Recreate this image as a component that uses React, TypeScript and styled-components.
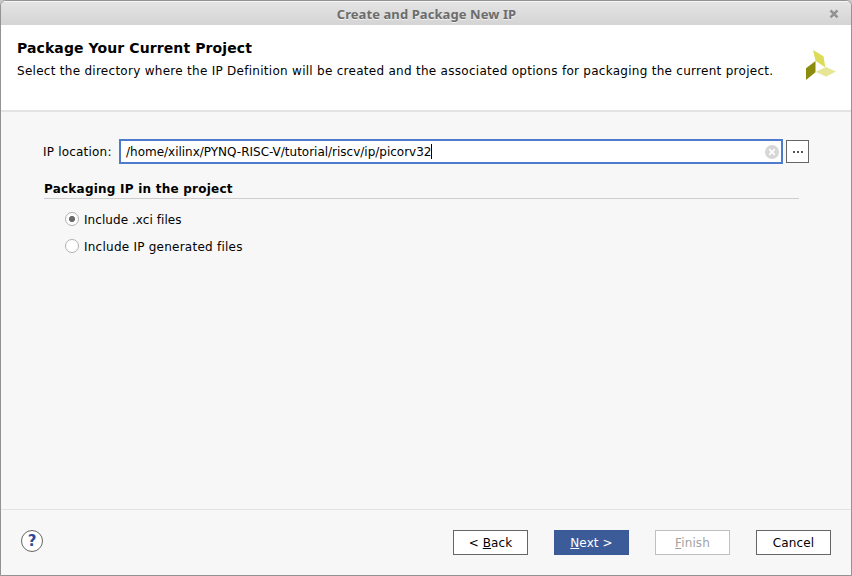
import React, { useState } from "react";
import styled, { createGlobalStyle } from "styled-components";

const GlobalStyle = createGlobalStyle`
  * { box-sizing: border-box; }
  html, body { margin: 0; background: #c9c7c7; overflow: hidden; }
  body { font-family: "DejaVu Sans", sans-serif; font-size: 12px; color: #000; }
  button { font: inherit; }
`;

const Window = styled.div`
  width: 852px;
  height: 576px;
  display: flex;
  flex-direction: column;
  background: #f7f7f7;
  border: 1px solid #949292;
  border-radius: 6px 6px 0 0;
  overflow: hidden;
`;

const TitleBar = styled.header`
  height: 24px;
  flex: none;
  display: grid;
  grid-template-columns: 28px 1fr 28px;
  align-items: center;
  justify-items: center;
  border-top: 1px solid #f6f6f6;
  background: linear-gradient(#e4e4e4, #d4d4d4);
`;

const WindowTitle = styled.div`
  grid-column: 2;
  padding-left: 1px;
  font: bold 13px/18px "Noto Sans", sans-serif;
  letter-spacing: 0.08px;
  color: #6c6c6c;
  text-shadow: 0 1px #f0f0f0;
  white-space: nowrap;
`;

const CloseButton = styled.button`
  display: flex;
  padding: 0;
  border: 0;
  background: none;
  margin-right: 6px;
`;

const Banner = styled.section`
  height: 87px;
  flex: none;
  display: flex;
  justify-content: space-between;
  padding: 13px 15px 0 16px;
  background: #fff;
  border-bottom: 2px solid #e3e3e3;
`;

const BannerTitle = styled.h1`
  margin: 0;
  font-size: 14px;
  line-height: 20px;
  letter-spacing: 0.1px;
`;

const BannerText = styled.p`
  margin: 4px 0 0;
  line-height: 18px;
  letter-spacing: 0.278px;
  white-space: nowrap;
`;

const Logo = styled.svg`
  margin-top: 12px;
  flex: none;
`;

const Content = styled.main`
  flex: 1;
  padding: 27px 42px 0;
`;

const LocationRow = styled.div`
  display: flex;
  align-items: center;
  height: 25px;
`;

const Label = styled.label`
  width: 76px;
  flex: none;
  letter-spacing: 0.2px;
  white-space: nowrap;
`;

const Field = styled.div`
  width: 664px;
  height: 25px;
  display: flex;
  align-items: center;
  padding: 0 2px 0 5px;
  border: 2px solid #4f7bcf;
  background: #fff;
`;

const Path = styled.span`
  white-space: nowrap;
  letter-spacing: -0.01px;
`;

const Caret = styled.span`
  width: 1px;
  height: 15px;
  background: #000;
  margin-right: auto;
`;

const BrowseButton = styled.button`
  width: 23px;
  height: 23px;
  margin-left: 3px;
  padding: 0;
  display: flex;
  align-items: center;
  justify-content: center;
  gap: 2px;
  border: 1px solid #666;
  background: #fff;
`;

const Dot = styled.i`
  width: 2px;
  height: 2px;
  background: #555;
`;

const GroupTitle = styled.h2`
  width: 755px;
  height: 20px;
  margin: 15px 0 0 1px;
  font-size: 12px;
  line-height: 20px;
  letter-spacing: 0.23px;
  border-bottom: 1px solid #cdcdcd;
`;

const Options = styled.div`
  display: flex;
  flex-direction: column;
  gap: 9px;
  padding: 12px 0 0 22px;
`;

const Option = styled.div<{ $tracking: number }>`
  height: 18px;
  display: flex;
  align-items: flex-start;
  gap: 5px;
  line-height: 18px;
  letter-spacing: ${(p) => p.$tracking}px;
`;

const Radio = styled.span<{ $on: boolean }>`
  width: 14px;
  height: 14px;
  margin-top: 1px;
  border: 1px solid #b0b0b0;
  border-radius: 50%;
  background: ${(p) => (p.$on ? "radial-gradient(circle, #6b6b6b 2.7px, #fff 3.5px)" : "#fff")};
`;

const Footer = styled.footer`
  height: 66px;
  flex: none;
  display: flex;
  align-items: flex-start;
  padding: 20px 20px 0;
  border-top: 1px solid #e3e3e3;
`;

const HelpButton = styled.button`
  width: 22px;
  height: 22px;
  padding: 0;
  margin-right: auto;
  border: 1px solid #666;
  border-radius: 50%;
  background: #fff;
  color: #2b4a9b;
  font-weight: bold;
  font-size: 15px;
  line-height: 20px;
`;

const Actions = styled.div`
  display: flex;
  gap: 26px;
`;

const tones = {
  normal: "border-color: #666; background: #fff; color: #000;",
  primary: "border-color: #3b5998; background: #3b5b99; color: #fff;",
  disabled: "border-color: #c0c0c0; background: #fff; color: #a3a3a3;",
};

const ActionButton = styled.button<{ $tone: keyof typeof tones }>`
  width: 75px;
  height: 25px;
  padding: 2px 0 0;
  border: 1px solid;
  line-height: 21px;
  letter-spacing: 0.1px;
  white-space: pre;
  ${(p) => tones[p.$tone]}
`;

const Key = styled.span`
  text-decoration: underline;
  text-decoration-thickness: 1px;
  text-underline-offset: 1px;
  text-decoration-skip-ink: none;
`;

const choices = [
  { text: "Include .xci files", tracking: 0.06 },
  { text: "Include IP generated files", tracking: 0.24 },
];

export default function App() {
  const [selected, setSelected] = useState(0);
  return (
    <>
      <GlobalStyle />
      <Window>
        <TitleBar>
          <WindowTitle>Create and Package New IP</WindowTitle>
          <CloseButton aria-label="Close">
            <svg width="10" height="10" viewBox="0 0 10 10">
              <path d="M1.7 2.5 8.3 9.1M8.3 2.5 1.7 9.1" stroke="#f4f4f4" strokeWidth="2.4" />
              <path d="M1.5 1.5 8.5 8.5M8.5 1.5 1.5 8.5" stroke="#929292" strokeWidth="2.5" />
            </svg>
          </CloseButton>
        </TitleBar>
        <Banner>
          <div>
            <BannerTitle>Package Your Current Project</BannerTitle>
            <BannerText>
              Select the directory where the IP Definition will be created and the associated options for packaging the current project.
            </BannerText>
          </div>
          <Logo width="30" height="30" viewBox="0 0 30 30">
            <path d="M7 0 17.5 6.2 19.4 17.4 9.5 10.7Z" fill="#dcdc58" />
            <path d="M0 18.2 9.5 11V22.3L0 30Z" fill="#8c8c0c" />
            <path d="M9.7 21.7 20 17 30 21.4 20 26.8Z" fill="#e6e696" />
          </Logo>
        </Banner>
        <Content>
          <LocationRow>
            <Label>IP location:</Label>
            <Field>
              <Path>/home/xilinx/PYNQ-RISC-V/tutorial/riscv/ip/picorv32</Path>
              <Caret />
              <svg width="14" height="14" viewBox="0 0 14 14">
                <circle cx="7" cy="7" r="7" fill="#d7d7d7" />
                <path d="M4.2 4.2 9.8 9.8M9.8 4.2 4.2 9.8" stroke="#fff" strokeWidth="1.7" />
              </svg>
            </Field>
            <BrowseButton aria-label="Browse">
              <Dot />
              <Dot />
              <Dot />
            </BrowseButton>
          </LocationRow>
          <GroupTitle>Packaging IP in the project</GroupTitle>
          <Options>
            {choices.map(({ text, tracking }, i) => (
              <Option key={text} $tracking={tracking} onClick={() => setSelected(i)}>
                <Radio $on={selected === i} />
                {text}
              </Option>
            ))}
          </Options>
        </Content>
        <Footer>
          <HelpButton>?</HelpButton>
          <Actions>
            <ActionButton $tone="normal">{"< "}<Key>B</Key>ack</ActionButton>
            <ActionButton $tone="primary"><Key>N</Key>{"ext >"}</ActionButton>
            <ActionButton $tone="disabled" disabled><Key>F</Key>inish</ActionButton>
            <ActionButton $tone="normal">Cancel</ActionButton>
          </Actions>
        </Footer>
      </Window>
    </>
  );
}
